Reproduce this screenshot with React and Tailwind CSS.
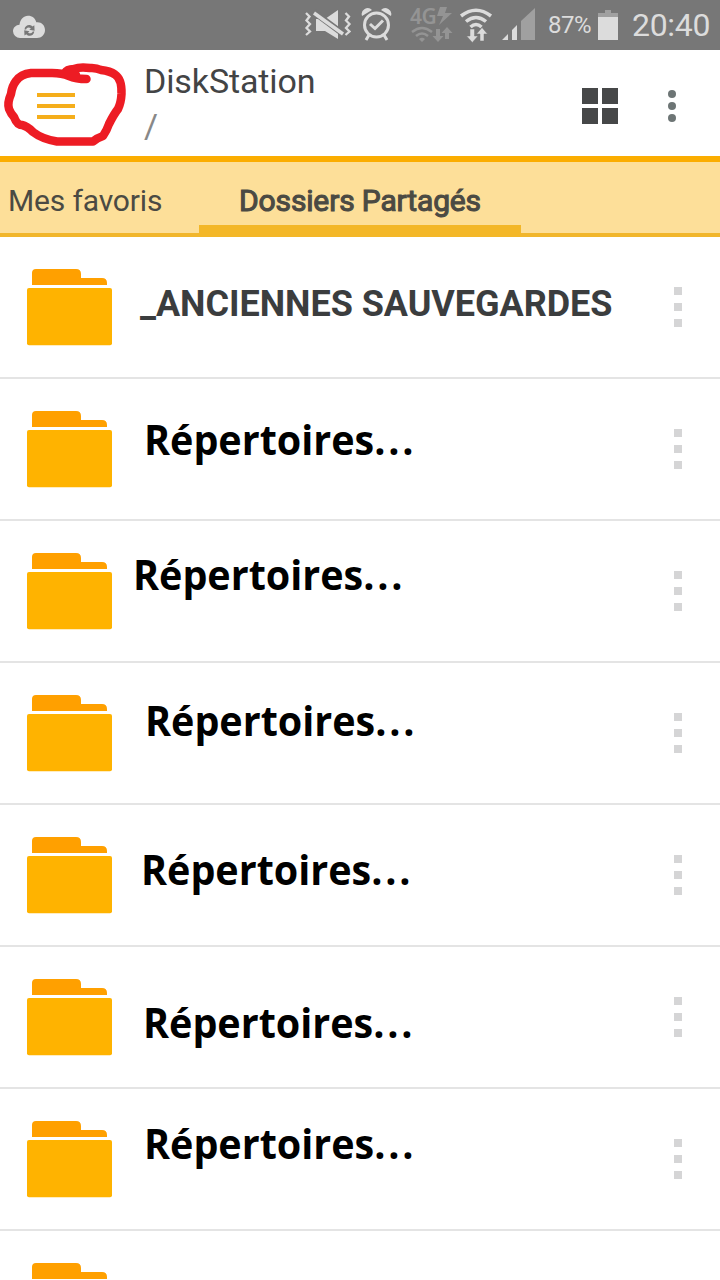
const FOLDERS = [
  { name: '_ANCIENNES SAUVEGARDES', own: true, className: 'pl-[28px] pt-[43px]' },
  { name: 'Répertoires', className: 'pl-[32px] pt-[36px]' },
  { name: 'Répertoires', className: 'pl-[21px] pt-[29px]' },
  { name: 'Répertoires', className: 'pl-[33px] pt-[33px]' },
  { name: 'Répertoires', className: 'pl-[29px] pt-[40px]' },
  { name: 'Répertoires', className: 'pl-[31px] pt-[51px]' },
  { name: 'Répertoires', className: 'pl-[32px] pt-[30px]' },
  { name: '', own: true, className: '' }
]

function CloudSyncIcon() {
  return (
    <svg className="ml-3 mt-1 shrink-0" width="34" height="24" viewBox="0 0 34 24">
      <path d="M8 23a7 7 0 0 1-7-6.700C1 12.500 4 10 7.500 9.800C8.200 4.500 11.500 .8 16 .8c4.200 0 7.500 2.700 8.300 6.500C29 6.500 33 10 33 15c0 4.500-3.500 8-8 8z" fill="#dcdcdc" />
      <path d="M12.500 14.500c.3-4.500 5.500-6 8-3l1.800-1.300.3 5.500-5.300-1 1.600-1.300c-2-1.800-4.300-1-4.800 1.100zM22.300 16.500c-.5 4.400-5.500 5.500-8 2.700l-1.800 1.400-.3-5.400 5.300 1-1.500 1.200c1.900 1.500 4.200.9 4.700-.9z" fill="#777" />
    </svg>
  )
}

function VibrateMuteIcon() {
  return (
    <svg className="shrink-0" width="48" height="34" viewBox="304 8 48 34">
      <path d="M306 13l3.500 3.500-3 4 3.500 3.500-3.500 4 3.500 3.500-4 3.500M345.500 13l3.500 3.500-3 4 3.500 3.500-3.500 4 3.500 3.500-4 3.500" fill="none" stroke="#dcdcdc" strokeWidth="2.300" />
      <path d="M316 19h9l13-9v29l-13-8h-9z" fill="#dcdcdc" />
      <path d="M313 11.500l31 23" stroke="#777" strokeWidth="6" />
      <path d="M314 13l29 21" stroke="#dcdcdc" strokeWidth="3.500" />
    </svg>
  )
}

function AlarmIcon() {
  return (
    <svg className="shrink-0" width="32" height="34" viewBox="361 7 32 34">
      <path d="M362 15a6 6 0 0 1 10-6zM381 9a6 6 0 0 1 10 6z" fill="#dcdcdc" />
      <circle cx="376.500" cy="24" r="12" fill="none" stroke="#dcdcdc" strokeWidth="3" />
      <path d="M370 23l5 4.500 8-8M369 34l-3 5M384 34l3 5" fill="none" stroke="#dcdcdc" strokeWidth="3" />
    </svg>
  )
}

function MobileDataIcon() {
  return (
    <div className="flex h-9 w-11 shrink-0 flex-col text-[#949494]">
      <div className="flex h-[18px] items-center">
        <span className="w-[28px] whitespace-nowrap pl-px font-['Noto_Sans',sans-serif] text-[21px] font-semibold leading-[28px] tracking-[-0.5px]">4G</span>
        <svg width="16" height="20" viewBox="438 7 16 20">
          <path d="M441 8h7l-2 6h7l-13 12 4-9h-6z" fill="#949494" />
        </svg>
      </div>
      <svg width="44" height="18" viewBox="409 24 44 18">
        <path d="M412 31q10-8 20 0M416 35q6-5 12 0" fill="none" stroke="#949494" strokeWidth="2.500" />
        <path d="M419 38q3-2.500 6 0l-3 3zM436 28h4v7h3.500l-5.500 6-5.500-6h3.500zM445 38h4v-6h3.500l-5.500-6-5.500 6h3.500z" fill="#949494" />
      </svg>
    </div>
  )
}

function WifiIcon() {
  return (
    <svg className="shrink-0" width="34" height="36" viewBox="459 6 34 36">
      <path d="M461 15q15-11.500 30 0M466 20.500q10-8 20 0M470.500 26q5.500-5 11 0" fill="none" stroke="#dcdcdc" strokeWidth="3.500" />
      <path d="M470 28h4.500v7h3.500l-5.700 6.500-5.700-6.500h3.400zM480 40h4v-7h3.500l-5.500-6.500-5.500 6.500h3.500z" fill="#dcdcdc" stroke="#777" strokeWidth=".5" />
    </svg>
  )
}

function StatusBar() {
  return (
    <div className="flex h-[50px] items-center bg-[#777] font-['Roboto',sans-serif] text-[#dcdcdc]">
      <CloudSyncIcon />
      <div className="ml-[258px] flex items-center">
        <VibrateMuteIcon />
        <div className="w-[9px]" />
        <AlarmIcon />
        <div className="w-4" />
        <MobileDataIcon />
        <div className="w-[6px]" />
        <WifiIcon />
        <svg className="ml-[9px] shrink-0" width="34" height="34" viewBox="502 8 34 34">
          <path d="M502 40l6-6v6zM512 30l5-5v15h-5z" fill="#dcdcdc" />
          <path d="M521 21l14-13v32h-14z" fill="#a0a0a0" />
        </svg>
      </div>
      <span className="ml-[12px] w-[44px] whitespace-nowrap text-[24px] leading-[28px] tracking-[-0.5px]">87%</span>
      <svg className="ml-[6px] shrink-0" width="20" height="30" viewBox="0 0 20 30">
        <path d="M0 3h7V0h6v3h7v4H0z" fill="#a0a0a0" />
        <path d="M0 7h20v23H0z" fill="#dcdcdc" />
      </svg>
      <span className="ml-[14px] whitespace-nowrap text-[32px] leading-[36px] tracking-[-0.3px]">20:40</span>
    </div>
  )
}

function Header() {
  return (
    <header className="relative flex h-[112px] border-b-[6px] border-[#fbad00] bg-white font-['Roboto',sans-serif]">
      <div className="ml-[37px] mt-[43px] flex h-[26px] w-[38px] flex-col justify-between">
        <div className="h-1 bg-[#f5ae1b]" />
        <div className="h-1 bg-[#f5ae1b]" />
        <div className="h-1 bg-[#f5ae1b]" />
      </div>
      <div className="ml-[69px] mt-[11px] flex-1">
        <h1 className="text-[34px] leading-[40px] tracking-[-0.12px] text-[#434445]">DiskStation</h1>
        <p className="mt-[5px] text-[34px] leading-[40px] text-[#888]">/</p>
      </div>
      <div className="mt-[38px] grid size-9 grid-cols-2 gap-1">
        <div className="bg-[#464748]" />
        <div className="bg-[#464748]" />
        <div className="bg-[#464748]" />
        <div className="bg-[#464748]" />
      </div>
      <div className="ml-[50px] mr-11 mt-10 flex w-2 flex-col gap-1">
        <div className="size-2 rounded-full bg-[#6d7575]" />
        <div className="size-2 rounded-full bg-[#6d7575]" />
        <div className="size-2 rounded-full bg-[#6d7575]" />
      </div>
      {/* Hand-drawn marker around the menu button */}
      <svg className="absolute left-0 top-0" width="130" height="106" viewBox="0 50 130 106">
        <path
          d="M86.500 79Q76 79 69 76T52 73H31Q21 74 16 81Q12 86 11 94Q7 103 9 109Q11 114 14 117Q17 125 22 125Q27 126 33 132Q42 139 57 141.500H93Q97 138 103 136Q107 130 109 124Q114 114 118 109Q121 103 121.500 94Q122 79 115 74.500Q110 71 101 70Q96 67.500 90 68Q80 66.500 74 69Q67 69 65 73L76 75"
          fill="none" stroke="#ed1c24" strokeWidth="8.500" strokeLinecap="round" strokeLinejoin="round"
        />
      </svg>
    </header>
  )
}

function Tabs() {
  return (
    <nav className="flex h-[75px] bg-[#fddf99] font-['Roboto',sans-serif] text-[30px] leading-[36px] tracking-[-0.15px] text-[#4b4a43]">
      <div className="w-[199px] border-b-4 border-[#f1b62c] pl-[8px] pt-[21px]">Mes favoris</div>
      <div className="w-[322px] border-b-[12px] border-[#f3b728] pt-[21px] text-center [-webkit-text-stroke:1.1px_#4b4a43]">
        Dossiers Partagés
      </div>
      <div className="flex-1 border-b-4 border-[#f1b62c]" />
    </nav>
  )
}

function FolderIcon() {
  return (
    <svg className="ml-[27px] mt-8 shrink-0" width="85" height="77" viewBox="0 0 85 77">
      <path d="M5 16V4q0-4 4-4h40q5 0 5 5v4h21q5 0 5 5v2z" fill="#ffa000" />
      <rect y="19" width="85" height="57.300" rx="2" fill="#ffb300" />
    </svg>
  )
}

function FolderRow({ folder }) {
  return (
    <li className="flex h-[142px] shrink-0 border-b-2 border-[#e4e4e4]">
      <FolderIcon />
      <div className={`min-w-0 flex-1 whitespace-nowrap ${folder.className}`}>
        {folder.own ? (
          <span className="block font-['Roboto',sans-serif] text-[36px] font-bold leading-[48px] tracking-[-0.04px] text-[#3b3d3e]">{folder.name}</span>
        ) : (
          <span className="block origin-left scale-x-[0.94] font-['Open_Sans',sans-serif] text-[42px] font-bold leading-[48px] text-black">
            {folder.name}<span className="tracking-[3px]">...</span>
          </span>
        )}
      </div>
      <div className="mr-[38px] mt-[50px] flex w-2 shrink-0 flex-col gap-2">
        <div className="size-2 bg-[#d5d5d6]" />
        <div className="size-2 bg-[#d5d5d6]" />
        <div className="size-2 bg-[#d5d5d6]" />
      </div>
    </li>
  )
}

export default function App() {
  return (
    <div className="h-[1280px] w-[720px] overflow-hidden bg-white">
      <StatusBar />
      <Header />
      <Tabs />
      <ul className="flex h-[1042px] flex-col overflow-hidden">
        {FOLDERS.map((folder, i) => <FolderRow key={i} folder={folder} />)}
      </ul>
    </div>
  )
}
